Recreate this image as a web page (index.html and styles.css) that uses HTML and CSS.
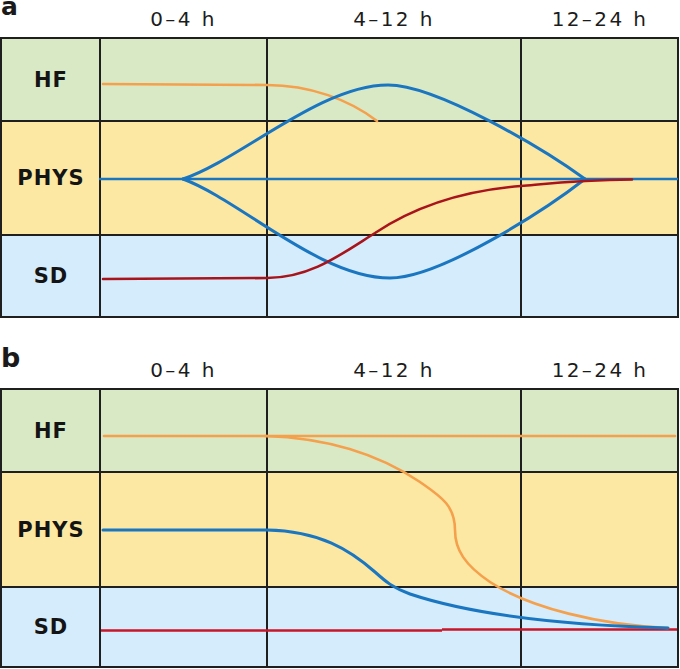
FILE: index.html
```html
<!DOCTYPE html>
<html>
<head>
<meta charset="utf-8">
<link rel="stylesheet" href="styles.css">
</head>
<body>
<div class="figure">
  <section class="panel panel-a">
    <div class="head head-a">
      <div class="letter">a</div>
      <div class="time">0–4 h</div>
      <div class="time">4–12 h</div>
      <div class="time">12–24 h</div>
    </div>
    <div class="chart chart-a">
      <div class="cell label hf">HF</div><div class="cell hf"></div><div class="cell hf"></div><div class="cell hf"></div>
      <div class="cell label phys">PHYS</div><div class="cell phys"></div><div class="cell phys"></div><div class="cell phys"></div>
      <div class="cell label sd">SD</div><div class="cell sd"></div><div class="cell sd"></div><div class="cell sd"></div>
      <svg class="curves" viewBox="0 37 679 281" preserveAspectRatio="none">
        <path class="c-orange" d="M103,84 L267,85 C310,85 350,100 377,121"/>
        <path class="c-blue thin" d="M100,179 L677,179"/>
        <path class="c-blue" d="M183,179 C240,160 320,85 388,85 C437,85 545,150 585,179"/>
        <path class="c-blue" d="M183,179 C240,200 320,278 390,278 C440,278 545,210 585,179"/>
        <path class="c-red" d="M103,279 L267,278 C310,278 340,255 375,233 C420,203 470,190 521,186 C555,183 580,180 632,179.5"/>
      </svg>
    </div>
  </section>
  <section class="panel panel-b">
    <div class="head head-b">
      <div class="letter">b</div>
      <div class="time">0–4 h</div>
      <div class="time">4–12 h</div>
      <div class="time">12–24 h</div>
    </div>
    <div class="chart chart-b">
      <div class="cell label hf">HF</div><div class="cell hf"></div><div class="cell hf"></div><div class="cell hf"></div>
      <div class="cell label phys">PHYS</div><div class="cell phys"></div><div class="cell phys"></div><div class="cell phys"></div>
      <div class="cell label sd">SD</div><div class="cell sd"></div><div class="cell sd"></div><div class="cell sd"></div>
      <svg class="curves" viewBox="0 388 679 280" preserveAspectRatio="none">
        <path class="c-red flat" d="M101,630.5 L442,630.5 M442,629.5 L677,629.5"/>
        <path class="c-orange" d="M104,436 L675,436"/>
        <path class="c-orange" d="M265,436 C330,438 380,455 420,482 C440,496 455,505 455,530 C455,550 465,565 490,582 C530,608 600,625 668,628"/>
        <path class="c-blue" d="M103,530 L267,530 C320,531 350,550 375,572 C385,581 393,588 410,594 C470,614 560,625 668,628"/>
      </svg>
    </div>
  </section>
</div>
</body>
</html>
```
FILE: styles.css
```css
html, body {
  margin: 0;
  padding: 0;
  background: #ffffff;
}
body {
  width: 680px;
  height: 669px;
  overflow: hidden;
  font-family: "DejaVu Sans", "Liberation Sans", sans-serif;
  color: #1a1a1a;
}
.figure {
  display: flex;
  flex-direction: column;
}
.head {
  display: grid;
  grid-template-columns: 100px 167px 254px 158px;
  align-items: end;
}
.head-a {
  height: 37px;
}
.head-b {
  height: 70px;
}
.letter {
  align-self: start;
  font-family: "DejaVu Sans", sans-serif;
  font-weight: bold;
  font-size: 27px;
  padding-left: 1px;
  letter-spacing: -0.5px;
}
.head-a .letter {
  font-size: 25px;
  line-height: 12px;
  margin-top: 1px;
}
.head-b .letter {
  line-height: 1;
  margin-top: 26px;
}
.time {
  text-align: center;
  font-family: "DejaVu Sans", sans-serif;
  font-size: 20px;
  letter-spacing: 2.4px;
  line-height: 1;
  padding-bottom: 8px;
  color: #1c1c1c;
}
.chart {
  position: relative;
  width: 679px;
  display: grid;
  grid-template-columns: 97px 165px 252px 155px;
  gap: 2px;
  padding: 2px;
  box-sizing: border-box;
  background: #1f1f1f;
}
.chart-a {
  grid-template-rows: 81px 112px 80px;
}
.chart-b {
  grid-template-rows: 81px 113px 78px;
}
.cell.hf { background: #d9e9c5; }
.cell.phys { background: #fde8a3; }
.cell.sd { background: #d4ecfb; }
.label {
  display: flex;
  align-items: center;
  justify-content: center;
  font-family: "DejaVu Sans", sans-serif;
  font-weight: bold;
  font-size: 21px;
  letter-spacing: 1px;
  padding-left: 1px;
  color: #141414;
}
.curves {
  position: absolute;
  left: 0;
  top: 0;
  width: 679px;
  height: 100%;
  overflow: visible;
}
.curves path {
  fill: none;
  stroke-linecap: round;
  stroke-linejoin: round;
}
.c-orange {
  stroke: #f4a04c;
  stroke-width: 2.6;
}
.c-blue {
  stroke: #1a76c0;
  stroke-width: 3;
}
.c-blue.thin {
  stroke-width: 2.4;
}
.c-red {
  stroke: #a8141c;
  stroke-width: 2.6;
}
.c-red.flat {
  stroke: #c8162a;
  stroke-linecap: butt;
}
```
